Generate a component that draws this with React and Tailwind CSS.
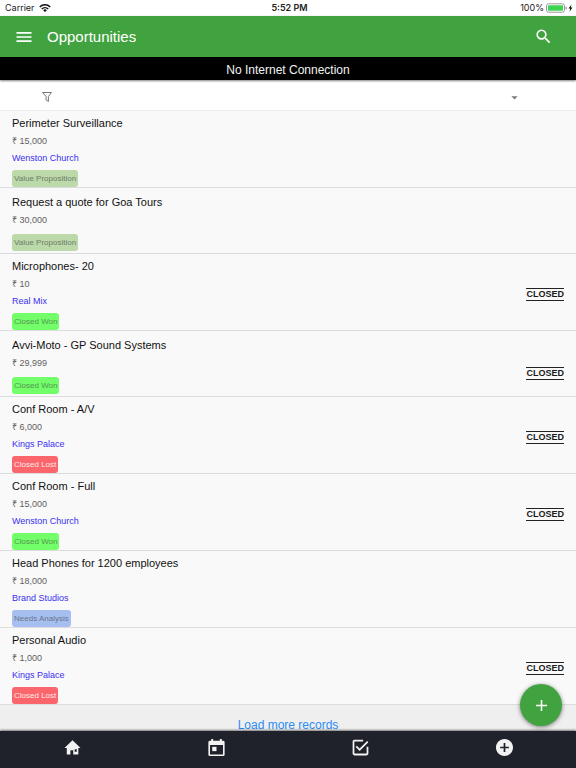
import { MdSearch, MdArrowDropDown, MdAdd } from 'react-icons/md'
import { IoMdMenu, IoMdAddCircle, IoMdCheckboxOutline } from 'react-icons/io'

const opportunities = [
  { name: 'Perimeter Surveillance', amount: '15,000', account: 'Wenston Church', stage: 'Value Proposition' },
  { name: 'Request a quote for Goa Tours', amount: '30,000', stage: 'Value Proposition' },
  { name: 'Microphones- 20', amount: '10', account: 'Real Mix', stage: 'Closed Won' },
  { name: 'Avvi-Moto - GP Sound Systems', amount: '29,999', stage: 'Closed Won' },
  { name: 'Conf Room - A/V', amount: '6,000', account: 'Kings Palace', stage: 'Closed Lost' },
  { name: 'Conf Room - Full', amount: '15,000', account: 'Wenston Church', stage: 'Closed Won' },
  { name: 'Head Phones for 1200 employees', amount: '18,000', account: 'Brand Studios', stage: 'Needs Analysis' },
  { name: 'Personal Audio', amount: '1,000', account: 'Kings Palace', stage: 'Closed Lost' },
]

const stageColors = {
  'Value Proposition': 'bg-[#bbd9a9] text-[#6f7b69]',
  'Closed Won': 'bg-[#72ff69] text-[#55944f]',
  'Closed Lost': 'bg-[#fb666c] text-[#ffe9e9]',
  'Needs Analysis': 'bg-[#a6bff0] text-[#69748a]',
}

const tabs = [
  { label: 'Home', icon: HomeIcon },
  { label: 'Calendar', icon: CalendarIcon },
  { label: 'Tasks', icon: IoMdCheckboxOutline },
  { label: 'Add', icon: IoMdAddCircle },
]

function HomeIcon({ size }) {
  return (
    <svg width={size} height={size} viewBox="0 0 22 22" fill="currentColor">
      <path fillRule="evenodd" d="M11 3.500l8.400 8h-2.300v6.800h-5.300v-4.500H8.800v4.500H5v-6.800H2.600zM13.300 12.800v2.700h2.200v-2.700z" />
    </svg>
  )
}

function CalendarIcon({ size }) {
  return (
    <svg width={size} height={size} viewBox="0 0 22 22" fill="currentColor">
      <path fillRule="evenodd" d="M5.500 2h2v2h7V2h2v2H18a1.500 1.500 0 0 1 1.500 1.500v13A1.500 1.500 0 0 1 18 20H4a1.500 1.500 0 0 1-1.500-1.500v-13A1.500 1.500 0 0 1 4 4h1.500zM4.200 8.500v9.800h13.600V8.500z" />
      <path d="M6.500 10.300h4.500v4.500H6.500z" />
    </svg>
  )
}

function WifiIcon() {
  return (
    <svg width="12" height="8" viewBox="0 0 24 16" fill="none" stroke="#111" strokeWidth="3">
      <path d="M1.500 6a15 15 0 0 1 21 0" />
      <path d="M5.500 10a9.200 9.200 0 0 1 13 0" />
      <path d="M12 16l-3.600-3.700a5.200 5.200 0 0 1 7.200 0z" fill="#111" stroke="none" />
    </svg>
  )
}

function BatteryIcon() {
  return (
    <svg width="28" height="10" viewBox="0 0 28 10">
      <rect x="0.500" y="0.800" width="18" height="8.400" rx="2" fill="#fff" stroke="#9a9a9a" />
      <rect x="2" y="2.300" width="15" height="5.400" rx="0.800" fill="#3fd552" />
      <path d="M19.500 3.500a1.500 1.500 0 0 1 0 3z" fill="#9a9a9a" />
      <path d="M25.500 1.500l-3 4h1.700l-.7 3.200 3-4.200h-1.700z" fill="#111" />
    </svg>
  )
}

function FunnelIcon() {
  return (
    <svg width="12" height="12" viewBox="0 0 12 12" fill="none" stroke="#777" strokeLinejoin="round">
      <path d="M1.500 1.500h9L7.400 5.500v5l-2.300-1.500v-3.500z" />
    </svg>
  )
}

function OpportunityRow({ name, amount, account, stage }) {
  return (
    <li className="flex min-h-[66px] items-center border-b border-[#dcdcdc] bg-[#f9f9f9]">
      <div className="flex w-full items-start justify-between px-3">
        <div className="flex flex-col items-start">
          <h2 className="text-[11px] leading-6 text-[#111]">{name}</h2>
          <p className="mb-1 text-[9px] leading-3 text-[#5f5f5f]">₹ {amount}</p>
          {account && (
            <a href="#account" className="text-[9px] leading-[15px] text-[#3a2ff0]">{account}</a>
          )}
          <span className={`mt-1 rounded-[3px] px-[2px] text-[8px] leading-[17px] ${stageColors[stage]}`}>
            {stage}
          </span>
        </div>
        {stage.startsWith('Closed') && (
          <span className="mt-[34px] border-y border-[#222] text-[9px] font-bold leading-[11px] text-[#1a1a1a]">CLOSED</span>
        )}
      </div>
    </li>
  )
}

export default function App() {
  return (
    <div className="flex h-screen flex-col bg-[#efefef] font-['Liberation_Sans',Arial,sans-serif]">
      {/* Status bar */}
      <div className="grid h-4 shrink-0 grid-cols-3 items-center bg-white pl-[5px] pr-[2px] font-[Inter,sans-serif] text-[9px] leading-4 text-[#222]">
        <div className="flex items-center gap-1">
          Carrier
          <WifiIcon />
        </div>
        <div className="text-center font-semibold">5:52 PM</div>
        <div className="flex items-center justify-end gap-[2px]">
          100%
          <BatteryIcon />
        </div>
      </div>

      <header className="z-10 shrink-0 shadow-[0_1px_2px_rgba(0,0,0,0.5)]">
        <div className="flex h-[41px] items-center bg-[#41a340] px-[14px] text-white">
          <button type="button" aria-label="Menu">
            <IoMdMenu size={20} />
          </button>
          <h1 className="ml-[13px] flex-1 pt-[2px] text-[15px]">Opportunities</h1>
          <button type="button" aria-label="Search" className="mr-[9px]">
            <MdSearch size={19} />
          </button>
        </div>
        <p className="bg-black pt-[3px] text-center text-[12px] leading-5 text-[#f2f2f2]">No Internet Connection</p>
      </header>

      {/* Filter bar */}
      <div className="flex h-[31px] shrink-0 items-center justify-between border-b border-[#ececec] bg-white pl-[41px] pr-[54px] pt-1">
        <button type="button" aria-label="Filter">
          <FunnelIcon />
        </button>
        <button type="button" aria-label="Sort">
          <MdArrowDropDown size={15} className="text-[#7a7a7a]" />
        </button>
      </div>

      <main className="min-h-0 flex-1 overflow-y-auto">
        <ul>
          {opportunities.map((item) => (
            <OpportunityRow key={item.name} {...item} />
          ))}
        </ul>
        <button type="button" className="block w-full pt-[14px] text-center text-[12px] leading-3 text-[#2b8cf5]">
          Load more records
        </button>
      </main>

      {/* Bottom tabs */}
      <nav className="relative grid h-[37px] shrink-0 grid-cols-4 bg-[#1f222b] pb-[5px] text-[#f2f2f2] shadow-[0_-1px_2px_rgba(0,0,0,0.5)]">
        {tabs.map(({ label, icon: Icon }) => (
          <button key={label} type="button" aria-label={label} className="flex items-center justify-center">
            <Icon size={21} />
          </button>
        ))}
        <button
          type="button"
          aria-label="New opportunity"
          className="absolute bottom-[42px] right-[14px] flex size-[42px] items-center justify-center rounded-full bg-[#41a340] text-white shadow-[0_1px_4px_rgba(0,0,0,0.5)]"
        >
          <MdAdd size={19} />
        </button>
      </nav>
    </div>
  )
}
